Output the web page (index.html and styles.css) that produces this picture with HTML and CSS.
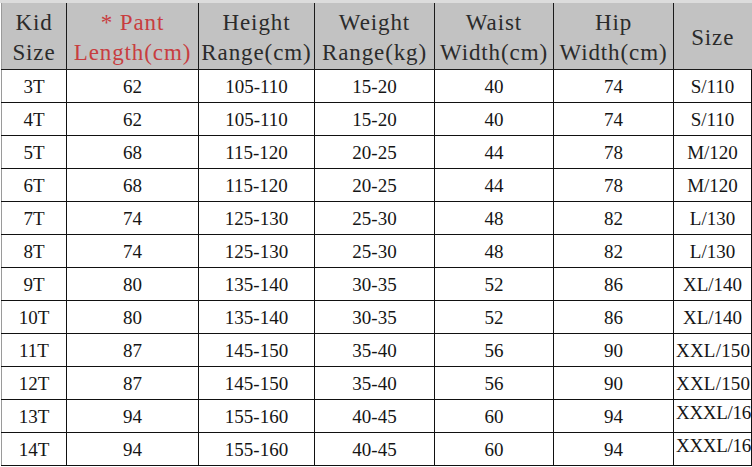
FILE: index.html
```html
<!DOCTYPE html>
<html>
<head>
<meta charset="utf-8">
<link rel="stylesheet" href="styles.css">
</head>
<body>
<div class="sheet">
<table class="chart">
<colgroup>
<col class="c-kid"><col class="c-pant"><col class="c-height"><col class="c-weight"><col class="c-waist"><col class="c-hip"><col class="c-size">
</colgroup>
<thead>
<tr>
<th>Kid<br>Size</th>
<th class="red">* Pant<br>Length(cm)</th>
<th>Height<br>Range(cm)</th>
<th>Weight<br>Range(kg)</th>
<th>Waist<br>Width(cm)</th>
<th>Hip<br>Width(cm)</th>
<th>Size</th>
</tr>
</thead>
<tbody>
<tr><td>3T</td><td>62</td><td>105-110</td><td>15-20</td><td>40</td><td>74</td><td>S/110</td></tr>
<tr><td>4T</td><td>62</td><td>105-110</td><td>15-20</td><td>40</td><td>74</td><td>S/110</td></tr>
<tr><td>5T</td><td>68</td><td>115-120</td><td>20-25</td><td>44</td><td>78</td><td>M/120</td></tr>
<tr><td>6T</td><td>68</td><td>115-120</td><td>20-25</td><td>44</td><td>78</td><td>M/120</td></tr>
<tr><td>7T</td><td>74</td><td>125-130</td><td>25-30</td><td>48</td><td>82</td><td>L/130</td></tr>
<tr><td>8T</td><td>74</td><td>125-130</td><td>25-30</td><td>48</td><td>82</td><td>L/130</td></tr>
<tr><td>9T</td><td>80</td><td>135-140</td><td>30-35</td><td>52</td><td>86</td><td>XL/140</td></tr>
<tr><td>10T</td><td>80</td><td>135-140</td><td>30-35</td><td>52</td><td>86</td><td>XL/140</td></tr>
<tr><td>11T</td><td>87</td><td>145-150</td><td>35-40</td><td>56</td><td>90</td><td class="tight">XXL/150</td></tr>
<tr><td>12T</td><td>87</td><td>145-150</td><td>35-40</td><td>56</td><td>90</td><td class="tight">XXL/150</td></tr>
<tr><td>13T</td><td>94</td><td>155-160</td><td>40-45</td><td>60</td><td>94</td><td class="clip">XXXL/16</td></tr>
<tr><td>14T</td><td>94</td><td>155-160</td><td>40-45</td><td>60</td><td>94</td><td class="clip">XXXL/16</td></tr>
</tbody>
</table>
</div>
</body>
</html>
```

FILE: styles.css
```css
html, body {
  margin: 0;
  padding: 0;
  background: #ffffff;
}

.sheet {
  padding-left: 1px;
  border-top: 3px solid #dcdcdc;
  width: 751px;
}

.chart {
  border-collapse: collapse;
  table-layout: fixed;
  width: 750px;
  font-family: "Liberation Serif", "DejaVu Serif", serif;
  color: #151515;
}

.c-kid { width: 65px; }
.c-pant { width: 132px; }
.c-height { width: 116px; }
.c-weight { width: 120px; }
.c-waist { width: 119px; }
.c-hip { width: 120px; }
.c-size { width: 78px; }

.chart th {
  background: #c2c2c2;
  color: #2b2b2b;
  font-family: "Liberation Serif", "DejaVu Serif", serif;
  font-weight: normal;
  font-size: 23px;
  line-height: 30px;
  height: 66px;
  padding: 5px 0 0 0;
  box-sizing: border-box;
  letter-spacing: 0.9px;
  border-left: 1px solid #1a1a1a;
  border-bottom: 1px solid #1a1a1a;
  text-align: center;
  vertical-align: middle;
  white-space: nowrap;
}

.chart th:first-child {
  border-left: 1px solid #9a9a9a;
}

.chart th.red {
  color: #c83d3f;
}

.chart td {
  font-size: 19px;
  height: 33px;
  padding: 3px 0 0 0;
  box-sizing: border-box;
  text-align: center;
  vertical-align: middle;
  border: 1px solid #111;
  white-space: nowrap;
}

.chart td:first-child {
  border-left: 1px solid #9a9a9a;
}

.chart td.tight {
  letter-spacing: 0.2px;
  text-align: left;
  padding-left: 2px;
}

.chart td.clip {
  text-align: left;
  padding: 0 0 6px 2px;
  letter-spacing: -0.3px;
}
```
